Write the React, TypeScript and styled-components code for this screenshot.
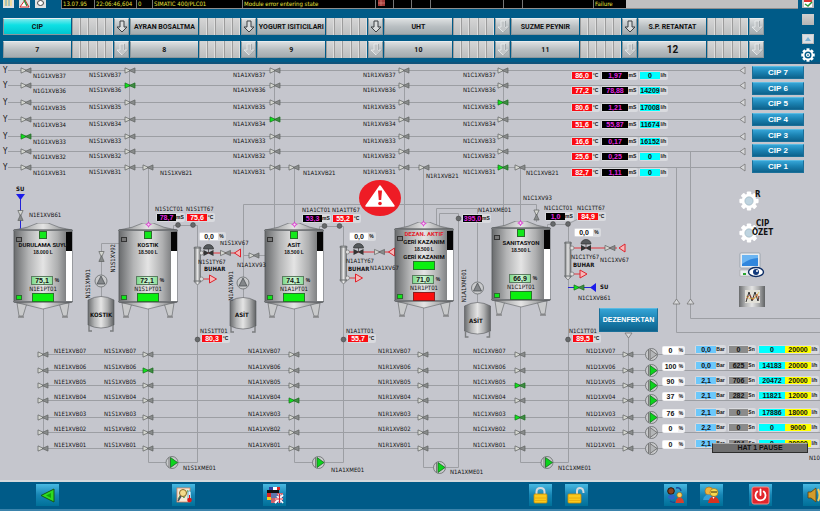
import React from 'react';
import styled, { createGlobalStyle, css } from 'styled-components';

/* Plant coordinates are measured from the top of the station screen,
   so the header height is subtracted when an item is placed. */
const HEADER = 64;

const GlobalStyle = createGlobalStyle`
  * { box-sizing: border-box; }
  body { margin: 0; background: #005b88; }
  button { padding: 0; margin: 0; border: 0; font: inherit; color: inherit; cursor: pointer; }
`;

const Screen = styled.div`
  display: flex;
  flex-direction: column;
  min-height: 100vh;
  overflow: hidden;
  background: #005b88;
  color: #111;
  font-family: 'DejaVu Sans Condensed', 'DejaVu Sans', sans-serif;
  font-size: 6px;
  line-height: 8px;
  white-space: nowrap;
`;

/* ---------- header ---------- */

const Header = styled.header`
  display: flex;
  height: ${HEADER}px;
  border-bottom: 2px solid #0f527a;
`;

const HeaderMain = styled.div`
  flex: 1;
  min-width: 0;
  display: flex;
  flex-direction: column;
`;

const AlarmStrip = styled.div`
  display: flex;
  align-items: stretch;
  height: 9px;
  padding-left: 3px;
`;

const AckTools = styled.div`
  display: flex;
  gap: 5px;
  width: 58px;
`;

const AckButton = styled.button`
  width: 11px;
  height: 8px;
  background: #dfe1e2;
  display: flex;
  justify-content: center;
`;

const AlarmLine = styled.div`
  flex: 1;
  display: flex;
  margin-right: -29px;
  background: #c0c0c0;
  border-bottom: 1px solid #8f8f8f;
`;

const AlarmCell = styled.span<{ $w: number }>`
  width: ${(p) => p.$w}px;
  background: #000;
  border-left: 1px solid #777;
  padding-left: 1px;
  color: #e8e23a;
  line-height: 7px;
`;

const TabArea = styled.nav`
  display: grid;
  grid-template-columns: repeat(6, 1fr);
  column-gap: 1px;
  row-gap: 6px;
  padding: 9px 5px 0 3px;
`;

const TabGroup = styled.div`
  display: flex;
  gap: 1px;
  height: 17px;
`;

const plate = css`
  background: linear-gradient(#dcdfe0, #b9bfc2 50%, #a3abaf);
  border: 1px solid #8a979d;
  border-top-color: #e9ecee;
`;

const Tab = styled.button<{ $active?: boolean; $large?: boolean }>`
  ${plate}
  flex: 68;
  min-width: 0;
  border-right: 0;
  font: 700 ${(p) => (p.$large ? 10 : 7)}px/14px Roboto, 'Liberation Sans', sans-serif;
  color: #111;
  ${(p) => p.$active && css`background: linear-gradient(#7ae9ec, #0fe0e4 40%, #00c5cf);`}
`;

const Stripes = styled.div`
  flex: 42;
  display: grid;
  grid-template-columns: repeat(5, 1fr);
`;

const Stripe = styled.span`
  background: linear-gradient(#d6d6d6, #bcbebf);
  border-left: 1px solid #9c9c9c;
  border-right: 1px solid #dedede;
`;

const TabArrow = styled.button`
  ${plate}
  width: 15px;
  display: flex;
  align-items: center;
  justify-content: center;
`;

const SideTools = styled.div`
  width: 51px;
  display: grid;
  grid-template-rows: 14px 20px 14px 14px;
  align-items: start;
  justify-items: center;
  padding-left: 26px;
`;

const SideButton = styled.button<{ $h: number; $bare?: boolean }>`
  width: ${(p) => (p.$bare ? 14 : 12)}px;
  height: ${(p) => p.$h}px;
  background: ${(p) => (p.$bare ? 'none' : 'linear-gradient(#d0d0d0, #b4b4b4)')};
  display: flex;
  align-items: center;
  justify-content: center;
`;

/* ---------- plant ---------- */

const Plant = styled.main`
  position: relative;
  flex: 1;
  min-height: 416px;
  background: #c5c6cd;
  overflow: hidden;
`;

const Drawing = styled.svg`
  position: absolute;
  inset: 0;
  width: 100%;
  height: 100%;
`;

const at = css<{ $x: number; $y: number }>`
  position: absolute;
  left: ${(p) => p.$x}px;
  top: ${(p) => p.$y - HEADER}px;
`;

const Tag = styled.span<{ $x: number; $y: number; $bold?: boolean; $size?: number }>`
  ${at}
  font-size: ${(p) => p.$size ?? 6}px;
  font-weight: ${(p) => (p.$bold ? 700 : 400)};
  line-height: 7px;
`;

const SideTag = styled(Tag)`
  writing-mode: vertical-rl;
  transform: rotate(180deg);
`;

const PlacedRow = styled.div<{ $x: number; $y: number; $gap?: number }>`
  ${at}
  display: flex;
  gap: ${(p) => p.$gap ?? 2}px;
`;

const Panel = styled.span<{ $white?: boolean }>`
  display: flex;
  padding: 1px;
  border-radius: 2px;
  background: ${(p) => (p.$white ? '#f0f0f2' : '#d9dade')};
`;

const Value = styled.output<{ $bg: string; $fg?: string; $w: number }>`
  width: ${(p) => p.$w}px;
  height: 7px;
  background: ${(p) => p.$bg};
  color: ${(p) => p.$fg ?? '#111'};
  font-family: 'Liberation Sans', sans-serif;
  font-size: 7px;
  font-weight: 700;
  line-height: 7px;
  text-align: center;
`;

const Unit = styled.span<{ $w: number }>`
  width: ${(p) => p.$w}px;
  font-family: 'Liberation Sans', sans-serif;
  font-size: 5px;
  font-weight: 700;
  line-height: 7px;
  text-align: center;
`;

const CipList = styled.div`
  position: absolute;
  top: 2px;
  left: 752px;
  width: 52px;
  height: 107px;
  display: flex;
  flex-direction: column;
  justify-content: space-between;
`;

const blueFace = css`
  background: linear-gradient(#35a4d6, #1c84b4 45%, #0d628c);
  border: 1px solid #1b6f98;
  border-top-color: #5bbbe2;
  color: #fff;
  font-family: 'Liberation Sans', sans-serif;
  font-weight: 700;
`;

const CipButton = styled.button`
  ${blueFace}
  height: 13px;
  font-size: 8px;
  line-height: 11px;
`;

const DisinfectantButton = styled.button<{ $x: number; $y: number }>`
  ${blueFace}
  ${at}
  width: 59px;
  height: 24px;
  font-size: 7px;
`;

const PauseBanner = styled.button<{ $x: number; $y: number }>`
  ${at}
  width: 96px;
  height: 10px;
  background: #6f6f70;
  border: 1px solid #2d2d2d;
  border-top-color: #aaa;
  font: 700 7px/8px 'Liberation Sans', sans-serif;
  color: #111;
`;

const ToolButton = styled.button<{ $x: number; $y: number; $w: number; $h: number }>`
  ${at}
  width: ${(p) => p.$w}px;
  height: ${(p) => p.$h}px;
  background: none;
`;

const TankBox = styled.section<{ $x: number; $y: number }>`
  ${at}
  width: 60px;
  height: 96px;
`;

const TankArt = styled.svg`
  position: absolute;
  inset: 0;
`;

const TankFace = styled.div`
  position: relative;
  height: 79px;
  padding-top: 8px;
  display: flex;
  flex-direction: column;
  align-items: center;
`;

const Lamp = styled.i`
  width: 8px;
  height: 8px;
  margin-bottom: 2px;
  background: #12e81b;
  border: 1px solid #2b6a2b;
`;

const TankName = styled.strong<{ $alarm?: boolean }>`
  line-height: 8px;
  font-family: Roboto, 'Liberation Sans', sans-serif;
  font-weight: 700;
  color: ${(p) => (p.$alarm ? '#e3202a' : '#111')};
`;

const Volume = styled.span`
  font-family: 'Liberation Sans', sans-serif;
  font-size: 5px;
  font-weight: 700;
  line-height: 7px;
`;

const Command = styled.button<{ $stop?: boolean }>`
  width: 22px;
  height: 9px;
  flex: none;
  background: ${(p) => (p.$stop ? '#fb0d0d' : '#0bf00f')};
  border: 1px solid ${(p) => (p.$stop ? '#8a1d1d' : '#27752a')};
`;

const Level = styled.div`
  margin-top: auto;
  display: flex;
  align-items: center;
  padding-left: 6px;
`;

const LevelValue = styled.output`
  width: 22px;
  height: 9px;
  background: linear-gradient(90deg, #7dd88c, #d3f7d6 50%, #8de09a);
  border: 1px solid #5b7c60;
  font-family: 'Liberation Sans', sans-serif;
  font-size: 7px;
  font-weight: 700;
  line-height: 7px;
  text-align: center;
`;

/* ---------- footer ---------- */

const Footer = styled.footer`
  height: 31px;
  padding-top: 2px;
  overflow: hidden;
  background: #005b88;
  border-top: 2px solid #d4d9dd;
  border-bottom: 2px solid #3a83ab;
`;

const FooterBar = styled.nav`
  display: flex;
  margin-right: -6px;
`;

const Slot = styled.div<{ $space: number }>`
  flex: ${(p) => p.$space} 0 23px;
  display: flex;
  justify-content: flex-end;
`;

const FooterButton = styled.button`
  width: 23px;
  height: 22px;
  background: linear-gradient(#48b9e2, #1685b4 50%, #007199);
  display: flex;
  align-items: center;
  justify-content: center;
`;

/* ---------- symbols ---------- */

const PIPE = '#9c9ea3';

type ValveProps = { x: number; y: number; open?: boolean; vertical?: boolean };
function Valve({ x, y, open, vertical }: ValveProps) {
  return (
    <g transform={`translate(${x} ${y})${vertical ? ' rotate(90)' : ''}`} stroke={open ? '#16691a' : '#5d605f'} strokeWidth="0.7">
      <path d="M-5 -2.600 L0.800 0 L-5 2.600Z" fill={open ? '#0ee31b' : '#d4d6d0'} />
      <path d="M5 -2.600 L-0.800 0 L5 2.600Z" fill={open ? '#3f8b42' : '#888b8b'} />
    </g>
  );
}

function Pump({ x, y, on, up }: { x: number; y: number; on?: boolean; up?: boolean }) {
  return (
    <g transform={`translate(${x} ${y})`}>
      <circle r="6" fill="#c9cacc" stroke="#66696b" strokeWidth="0.8" />
      {up ? (
        <path d="M-4 3 L0 -5 L4 3Z" fill="#84878a" stroke="#44474a" strokeWidth="0.7" />
      ) : (
        <>
          <path d="M-3 -5 V5" stroke="#666" strokeWidth="0.8" />
          <path d="M-1.500 -5 L5.500 0 L-1.500 5Z" fill={on ? '#0bd51c' : '#b4b6b8'} stroke={on ? '#176a1e' : '#666'} strokeWidth="0.8" />
        </>
      )}
    </g>
  );
}

function SmallTank({ x, y }: { x: number; y: number }) {
  return (
    <g transform={`translate(${x} ${y})`} stroke="#55585a" strokeWidth="0.6">
      <path d="M0 4 Q13 -3 26 4 V29 Q13 35 0 29Z" fill="url(#steel)" />
      <path d="M1 29 V35 H4 M25 29 V35 H22" fill="none" strokeWidth="1.4" stroke="#7b7d7f" />
    </g>
  );
}

/* Steam line: heat exchanger, control valve, shut-off valve and condensate outlet. */
function SteamLine({ x, y, reach = 0 }: { x: number; y: number; reach?: number }) {
  return (
    <g transform={`translate(${x} ${y})`}>
      <path d={`M3 0 H${42 + reach} M3 26 H14`} stroke="#e0353c" strokeWidth="1" />
      <path d="M-3 -6 H3 V29 L0 32 L-3 29Z" fill="url(#steel)" stroke="#6d7072" strokeWidth="0.7" />
      <path d="M-4 -5 H4 M-4 28 H4" stroke="#6d7072" />
      <circle cx="4" cy="0" r="2" fill="#ddd" stroke="#777" strokeWidth="0.7" />
      <circle cx="4" cy="26" r="2" fill="#ddd" stroke="#777" strokeWidth="0.7" />
      <path d={`M${6 + reach} -4 A5 4.500 0 0 1 ${16 + reach} -4Z M${11 + reach} -4 V0`} fill="#55595c" stroke="#333" strokeWidth="0.7" />
      <path d={`M${6 + reach} -3 L${12 + reach} 0 L${6 + reach} 3Z M${16 + reach} -3 L${10 + reach} 0 L${16 + reach} 3Z`} fill="#333" />
      <Valve x={28 + reach * 2} y={0} />
      <path d={`M${43 + reach * 2} -4 L${37 + reach * 2} 0 L${43 + reach * 2} 4Z M12 22 L19 26 L12 30Z`} fill="#f6b9b9" stroke="#e0202a" />
    </g>
  );
}

function Gear({ size, core }: { size: number; core: string }) {
  return (
    <svg width={size} height={size} viewBox="-12 -12 24 24">
      <g fill="#fff">
        {[0, 45, 90, 135].map((a) => (
          <rect key={a} x="-2.600" y="-11.500" width="5.200" height="23" rx="1" transform={`rotate(${a})`} />
        ))}
        <circle r="8.800" />
      </g>
      <circle r="5" fill={core} stroke="#8da4b0" strokeWidth="0.6" />
    </svg>
  );
}

/* Ring-shaped gear with a hub, used on the dark header. */
function SettingsGear() {
  return (
    <svg width="14" height="14" viewBox="-12 -12 24 24">
      <g fill="#fff">
        {[0, 45, 90, 135].map((a) => (
          <rect key={a} x="-2.600" y="-11.500" width="5.200" height="23" transform={`rotate(${a})`} />
        ))}
        <circle r="9" />
      </g>
      <circle r="6" fill="#005b88" />
      <circle r="3.600" fill="#fff" />
      <circle r="1.500" fill="#005b88" />
    </svg>
  );
}

function Arrow({ dim }: { dim?: boolean }) {
  return (
    <svg width="12" height="13" viewBox="0 0 12 13">
      <path d="M4 1 H8 V7 H11 L6 12 L1 7 H4Z" fill={dim ? '#c2c6c8' : '#d9dcdd'} stroke={dim ? '#eef0f1' : '#3c4144'} strokeWidth={dim ? 0.8 : 1} />
      {dim && <path d="M8.500 1 V7 M6.500 12 L11.500 7" stroke="#8f9699" strokeWidth="0.7" />}
    </svg>
  );
}

/* ---------- data ---------- */

const TABS = [
  ['CIP', '7'],
  ['AYRAN BOSALTMA', '8'],
  ['YOGURT ISITICILARI', '9'],
  ['UHT', '10'],
  ['SUZME PEYNIR', '11'],
  ['S.P. RETANTAT', '12'],
];
const DIM_ARROWS = [3, 5];

const ALARM_CELLS: [number, string][] = [
  [33, '13.07.95'], [42, '22:06:46,604'], [16, '0'], [90, 'SIMATIC 400/PLC01'],
  [133, 'Module error entering state'], [18, ''], [18, ''], [19, ''], [73, ''], [19, ''], [71, ''], [33, 'Failure'],
];

const SUPPLY = [
  { n: 7, y: 70, t: '86,0', c: '1,97', f: '0', open: '' },
  { n: 6, y: 85, t: '77,2', c: '78,88', f: '14209', open: 'S' },
  { n: 5, y: 102, t: '80,6', c: '1,21', f: '17008', open: 'C' },
  { n: 4, y: 119, t: '51,6', c: '55,87', f: '11674', open: 'A' },
  { n: 3, y: 136, t: '16,6', c: '0,17', f: '16152', open: 'G' },
  { n: 2, y: 151, t: '25,6', c: '0,25', f: '0', open: '' },
  { n: 1, y: 167, t: '82,7', c: '1,11', f: '0', open: 'C' },
];
const SUPPLY_COLS = [
  { id: 'G', valve: 26, label: 33, drop: 2 },
  { id: 'S', valve: 130, label: 89, drop: 1 },
  { id: 'A', valve: 275, label: 233, drop: 1 },
  { id: 'R', valve: 404, label: 363, drop: 1 },
  { id: 'C', valve: 503, label: 463, drop: 1 },
];

const RETURN = [
  { n: 7, y: 354, open: '', pump: false, p: '0', bar: '0,0', sn: '0', q: '0', set: '20000' },
  { n: 6, y: 370, open: 'S', pump: true, p: '100', bar: '0,0', sn: '625', q: '14183', set: '20000' },
  { n: 5, y: 385, open: 'C', pump: true, p: '90', bar: '2,1', sn: '706', q: '20472', set: '20000' },
  { n: 4, y: 400, open: 'A', pump: true, p: '37', bar: '2,1', sn: '282', q: '11821', set: '12000' },
  { n: 3, y: 417, open: 'C', pump: true, p: '76', bar: '2,1', sn: '0', q: '17886', set: '18000' },
  { n: 2, y: 432, open: '', pump: false, p: '0', bar: '2,2', sn: '0', q: '0', set: '9000' },
  { n: 1, y: 448, open: '', pump: false, p: '0', bar: '2,1', sn: '404', q: '0', set: '20000' },
];
const RETURN_COLS = [
  { id: 'E', valve: 43, label: 54, kind: 'XVB' },
  { id: 'S', valve: 148, label: 104, kind: 'XVB' },
  { id: 'A', valve: 294, label: 248, kind: 'XVB' },
  { id: 'R', valve: 423, label: 378, kind: 'XVB' },
  { id: 'C', valve: 520, label: 473, kind: 'XVB' },
  { id: 'D', valve: 628, label: 586, kind: 'XV' },
];

type TankData = { x: number; y: number; name: string; vol: string; level: string; tag: string; alarm?: string };
const TANKS: TankData[] = [
  { x: 13, y: 223, name: 'DURULAMA SUYU', vol: '18.000 L', level: '75,1', tag: 'N1E1PT01' },
  { x: 118, y: 223, name: 'KOSTIK', vol: '18.500 L', level: '72,1', tag: 'N1S1PT01' },
  { x: 264, y: 223, name: 'ASİT', vol: '18.500 L', level: '74,1', tag: 'N1A1PT01' },
  { x: 394, y: 222, name: 'GERİ KAZANIM', vol: '18.500 L', level: '71,0', tag: 'N1R1PT01', alarm: 'DEZAN. AKTIF' },
  { x: 491, y: 221, name: 'SANITASYON', vol: '18.500 L', level: '66,9', tag: 'N1C1PT01' },
];

const TAGS: [string, number, number][] = [
  ['N1S1XVB21', 160, 169], ['N1A1XVB21', 303, 169], ['N1R1XVB21', 426, 172], ['N1C1XVB21', 526, 169],
  ['N1E1XVB61', 29, 211],
  ['N1S1CT01', 155, 205], ['N1S1TT67', 186, 205], ['N1S1XV67', 220, 239], ['N1S1TY67', 198, 258],
  ['N1A1XV93', 237, 261], ['N1S1TT01', 200, 327],
  ['N1A1CT01', 302, 206], ['N1A1TT67', 332, 206], ['N1A1TY67', 346, 257], ['N1A1XV67', 370, 264], ['N1A1TT01', 346, 327],
  ['N1A1XME01', 478, 206], ['N1C1XV93', 523, 194], ['N1C1CT01', 544, 204], ['N1C1TT67', 577, 204],
  ['N1C1TY67', 571, 253], ['N1C1XV67', 600, 256], ['N1C1XVB61', 578, 294], ['N1C1TT01', 569, 327],
  ['N1S1XME01', 183, 464], ['N1A1XME01', 331, 466], ['N1A1XME01', 450, 468], ['N1C1XME01', 558, 464],
  ['N10', 809, 454],
];
const BOLD_TAGS: [string, number, number][] = [
  ['SU', 16, 185], ['SU', 600, 283], ['BUHAR', 204, 265], ['BUHAR', 348, 265], ['BUHAR', 573, 261],
  ['KOSTIK', 90, 311], ['ASİT', 235, 311], ['ASİT', 469, 317],
];
const SIDE_TAGS: [string, number, number][] = [
  ['N1S1XV92', 109, 244], ['N1S1XM01', 84, 269], ['N1A1XM01', 227, 271], ['N1A1XME01', 460, 269],
];
const PROBES: [string, 'T' | 'C', number, number][] = [
  ['78,7', 'C', 156, 213], ['75,6', 'T', 186, 213], ['80,3', 'T', 201, 334],
  ['53,3', 'C', 302, 214], ['55,2', 'T', 332, 214], ['55,7', 'T', 347, 334],
  ['395,0', 'C', 462, 214], ['1,0', 'C', 545, 212], ['84,9', 'T', 577, 212], ['89,5', 'T', 572, 334],
];

/* ---------- parts ---------- */

function Reading({ kind, value }: { kind: 'T' | 'C' | 'F'; value: string }) {
  if (kind === 'T') return <Panel><Value $bg="#fb0b12" $fg="#fff" $w={20}>{value}</Value><Unit $w={7}>°C</Unit></Panel>;
  if (kind === 'C') return <Panel><Value $bg="#000" $fg="#e02bdf" $w={19}>{value}</Value><Unit $w={8}>mS</Unit></Panel>;
  return <Panel><Value $bg="#0ff" $w={20}>{value}</Value><Unit $w={7}>l/h</Unit></Panel>;
}

function Tank({ x, y, name, vol, level, tag, alarm }: TankData) {
  return (
    <TankBox $x={x} $y={y} aria-label={name}>
      <TankArt width="60" height="96" viewBox="0 0 60 96">
        <path d="M4 80 H14 L10 93 H6Z M56 80 H46 L50 93 H54Z" fill="#c9cacb" stroke="#6b6e70" strokeWidth="0.7" />
        <path d="M5 94 H11 M49 94 H55" stroke="#666" />
        <path d="M1 7 Q15 5 25 0 H35 Q45 5 59 7Z" fill="url(#steel)" stroke="#606366" strokeWidth="0.6" />
        <path d="M1 79 L30 86 L59 79Z" fill="url(#steel)" stroke="#606366" strokeWidth="0.6" />
        <rect x="1" y="7" width="58" height="72" fill="url(#steel)" stroke="#55585a" strokeWidth="0.8" />
        <path d="M0 7.500 H60 M0 78.500 H60" stroke="#74777a" />
        <rect x="53" y="9" width="6" height="69" fill="#fff" />
        <rect x="53" y="9" width="6" height="19" fill="#050505" />
        <rect x="3.500" y="14.500" width="5" height="4" fill="#777" stroke="#333" />
        <rect x="3.500" y="72.500" width="5" height="4" fill="#10e81a" stroke="#2c6d2e" />
      </TankArt>
      <TankFace>
        {alarm ? <TankName $alarm>{alarm}</TankName> : <Lamp />}
        <TankName>{name}</TankName>
        <Volume>{vol}</Volume>
        {alarm && <TankName>{name}</TankName>}
        {alarm && <Command aria-label="Start" />}
        <Level><LevelValue>{level}</LevelValue><Unit $w={8}>%</Unit></Level>
        <span>{tag}</span>
        <Command $stop={!!alarm} aria-label={`${tag} command`} />
      </TankFace>
    </TankBox>
  );
}

function Piping() {
  return (
    <Drawing aria-hidden="true">
      <defs>
        <linearGradient id="steel">
          <stop offset="0" stopColor="#696b6d" />
          <stop offset="0.250" stopColor="#b3b4b5" />
          <stop offset="0.500" stopColor="#e4e4e4" />
          <stop offset="0.750" stopColor="#aeafb0" />
          <stop offset="1" stopColor="#606264" />
        </linearGradient>
      </defs>
      <g transform={`translate(0 -${HEADER})`}>
        <g stroke={PIPE} fill="none">
          {SUPPLY.map((r) => <path key={r.n} d={`M8 ${r.y + 0.5} H742`} />)}
          {RETURN.map((r) => <line key={r.n} x1="38" x2="100%" y1={r.y + 0.5} y2={r.y + 0.5} />)}
          <path d="M129.500 70 V230 M274.500 70 V230 M404.500 70 V230 M503.500 70 V228" />
          <path d="M148.500 167 V224 M294.500 167 V224 M423.500 167 V224 M520.500 167 V222" />
          <path d="M690.500 151 V318.500 H2000 M676.500 167 V332.500 H2000" />
          <path d="M43.500 308 V448 M148.500 308 V462.500 H197.500 V225.500 H173.500 V230" />
          <path d="M294.500 308 V462.500 H343.500 V226.500 H319.500 V230" />
          <path d="M423.500 308 V467.500 H458.500 V213.500 H439.500 V229 M436.500 229 V208.500 H477.500 V303" />
          <path d="M520.500 306 V462.500 H568.500 V224.500 H547.500 V228 M568 224 L580 218" />
          <path d="M628.500 333 V448 M119 243.500 H101.500 V297 M243.500 298 V204.500 H536.500 V222 M243 255.500 H265" />
        </g>
        {SUPPLY.map((r) => (
          <g key={r.n}>
            <path d={`M745 ${r.y - 3} V${r.y + 4} L740 ${r.y + 0.5}Z`} fill="#d7d8da" stroke="#777" strokeWidth="0.8" />
            {SUPPLY_COLS.map((c) => <Valve key={c.id} x={c.valve} y={r.y + 0.5} open={r.open === c.id} />)}
          </g>
        ))}
        {[148, 294, 424, 520].map((x) => <Valve key={x} x={x} y={167.5} />)}
        {RETURN.map((r) => (
          <g key={r.n}>
            {RETURN_COLS.map((c) => <Valve key={c.id} x={c.valve} y={r.y + 0.5} open={r.open === c.id} />)}
            <Pump x={651.5} y={r.y + 0.5} on={r.pump} />
          </g>
        ))}
        <path d="M673 304 L676.500 299 L680 304Z M687 304 L690.500 299 L694 304Z M625 333 H632 L628.500 338Z" fill="#d7d8da" stroke="#777" strokeWidth="0.8" />
        <Pump x={172} y={462.5} on />
        <Pump x={318.5} y={462.5} on />
        <Pump x={439.5} y={467.5} on />
        <Pump x={547} y={462.5} on />
        <Pump x={101} y={281} up />
        <Pump x={243} y={283} up />
        <Pump x={477.5} y={288} up />
        <Valve x={101.5} y={256.5} vertical />
        <Valve x={536.5} y={215} vertical />
        <Valve x={254} y={255.5} />
        <SmallTank x={88} y={296} />
        <SmallTank x={230} y={297} />
        <SmallTank x={464.5} y={302} />
        <SteamLine x={197.5} y={253} />
        <SteamLine x={343.5} y={252} reach={4} />
        <SteamLine x={568} y={248} reach={7} />
        <path d="M20.500 198 V228 L18 234 M568 287.500 H592" stroke="#2222d8" fill="none" />
        <path d="M16 194 H25 L20.500 200Z M596 283 V292 L590 287.500Z" fill="#1b1bea" />
        <Valve x={20.5} y={215.5} vertical />
        <Valve x={579} y={287.5} open />
        <g fill="#66696b" stroke="#444" strokeWidth="0.6">
          {[[178, 225], [193, 225], [197.5, 339.5], [324.5, 226], [339.5, 226], [343.5, 339.5], [458.5, 218.5], [553, 224], [568, 224], [568, 339.5]].map(([x, y]) => (
            <circle key={`${x}-${y}`} cx={x} cy={y} r="2.400" />
          ))}
        </g>
        <ellipse cx="380" cy="198" rx="21" ry="18" fill="#ee1c25" />
        <path d="M380 186 L394 206 H366Z" fill="#fff" stroke="#fff" strokeWidth="1.500" strokeLinejoin="round" />
        <path d="M378 190.500 H382 L381.200 200 H378.800Z" fill="#ee1c25" />
        <circle cx="380" cy="203.500" r="1.800" fill="#ee1c25" />
      </g>
    </Drawing>
  );
}

/* Spray-ball markers on the tank domes. */
function SprayBalls() {
  return (
    <Drawing aria-hidden="true" pointerEvents="none">
      <g transform={`translate(0 -${HEADER})`} fill="#f7d3f3" stroke="#d93bd0">
        {[[148.5, 224.5], [294.5, 224.5], [423.5, 223.5], [520.5, 223]].map(([x, y]) => (
          <g key={x}>
            <path d={`M${x - 3} ${y} H${x + 3} M${x} ${y - 3} V${y + 3}`} strokeWidth="0.8" />
            <circle cx={x} cy={y} r="1.600" />
          </g>
        ))}
      </g>
    </Drawing>
  );
}

const padlock = (open: boolean) => (
  <svg width="19" height="19" viewBox="0 0 19 19">
    <path d={open ? 'M10 9 V5 Q10 2 13 2 Q16.500 2 16.500 7' : 'M5.500 9 V6 Q5.500 2 9.500 2 Q13.500 2 13.500 6 V9'} fill="none" stroke="#d5d9dc" strokeWidth="2" />
    <rect x={open ? 1 : 3} y="8" width="13" height="9" rx="1" fill="#fbc91c" stroke="#c58a08" strokeWidth="0.8" />
    <path d={open ? 'M2 12 H13 M2 14.500 H13' : 'M4 12 H15 M4 14.500 H15'} stroke="#e6a80c" strokeWidth="0.8" />
  </svg>
);

const FOOTER_ITEMS: { label: string; space: number; icon: React.ReactNode }[] = [
  { label: 'Back', space: 36, icon: <svg width="17" height="17" viewBox="0 0 17 17"><path d="M15 2 V15 L2 8.500Z" fill="#2edc20" stroke="#175a12" /><path d="M12 6 V11 L7 8.500Z" fill="#12a50c" /></svg> },
  {
    label: 'Temperature trends', space: 113, icon: (
      <svg width="18" height="18" viewBox="0 0 18 18">
        <rect x="2" y="2" width="13" height="14" fill="#f3e9d6" stroke="#e0805a" strokeWidth="0.8" />
        <path d="M3 13 L6 8 L9 12 L13 4" stroke="#56a35a" fill="none" />
        <circle cx="8" cy="7" r="3.500" fill="#f4dc8a" stroke="#8a6a24" /><path d="M6 10 L3 15" stroke="#46505a" strokeWidth="1.500" />
        <rect x="13" y="5" width="3" height="9" rx="1.500" fill="#d9f4ff" stroke="#28a" strokeWidth="0.6" /><circle cx="14.500" cy="14" r="2.300" fill="#e01818" /><path d="M14.500 9 V13" stroke="#e01818" />
      </svg>
    ),
  },
  {
    label: 'Language', space: 68, icon: (
      <svg width="19" height="18" viewBox="0 0 19 18">
        <path d="M4 1 H15 V4 H4Z" fill="#fff" /><path d="M4 1 H8 V4 H4Z" fill="#2b3fa0" /><path d="M12 1 H15 V4 H12Z" fill="#d22" />
        <path d="M2 4 H14 V7 H2Z" fill="#111" /><path d="M2 7 H7 V11 H2Z" fill="#d22" /><path d="M2 11 H7 V14 H2Z" fill="#f3cf20" />
        <rect x="6" y="7" width="12" height="10" fill="#c9606c" />
        <path d="M6 7 H12 V12 H6Z" fill="#5d78ab" /><path d="M12 9 H18 V17 H12Z" fill="#27408c" />
        <path d="M10 17 L18 9 M12 10 L18 17" stroke="#fff" strokeWidth="1.800" /><path d="M14.500 8 V17 M10 13 H18" stroke="#fff" strokeWidth="2.200" />
        <path d="M14.500 8 V17 M10 13 H18" stroke="#cf2130" strokeWidth="1.100" />
      </svg>
    ),
  },
  { label: 'Lock', space: 243, icon: padlock(false) },
  { label: 'Unlock', space: 13, icon: padlock(true) },
  {
    label: 'Change user', space: 76, icon: (
      <svg width="19" height="18" viewBox="0 0 19 18">
        <circle cx="5" cy="5" r="3.300" fill="#8a4320" stroke="#2a1509" /><path d="M2 12 Q2 8.500 5.500 8.500 Q9 8.500 9 12 L6 14Z" fill="#2f62c8" />
        <path d="M10 2 Q14 1 15 5 M4 15 Q7 17 9 16" stroke="#164a96" fill="none" strokeWidth="1.400" />
        <circle cx="13.500" cy="9" r="2.600" fill="#f4d264" stroke="#a06a14" strokeWidth="0.7" /><path d="M9.500 17 Q10 11.500 13.500 11.500 Q17.500 11.500 18 17Z" fill="#d9402c" />
      </svg>
    ),
  },
  {
    label: 'Users', space: 13, icon: (
      <svg width="19" height="18" viewBox="0 0 19 18">
        <circle cx="7" cy="5" r="4" fill="#f0b43c" stroke="#a8661a" strokeWidth="0.6" /><path d="M1 14 Q2 8.500 7 8.500 Q10 9 11 14Z" fill="#35a0d8" />
        <circle cx="12" cy="6.500" r="4" fill="#f8d94e" stroke="#9a6612" strokeWidth="0.6" /><path d="M9 6 H15" stroke="#33240b" />
        <path d="M6 17 Q7 10.500 11.500 10.500 Q16.500 10.500 17.500 17Z" fill="#d8321f" /><path d="M10.500 11 L11.500 13 L12.500 11Z" fill="#fff" />
      </svg>
    ),
  },
  {
    label: 'Shut down', space: 26, icon: (
      <svg width="19" height="19" viewBox="0 0 19 19">
        <rect x="1" y="1" width="17" height="17" rx="2" fill="#e2262c" stroke="#f58a86" />
        <path d="M6.300 5.500 A5 5 0 1 0 12.700 5.500 M9.500 3.500 V9" fill="none" stroke="#fff" strokeWidth="1.800" strokeLinecap="round" />
      </svg>
    ),
  },
  { label: 'Horn', space: 31, icon: <svg width="19" height="18" viewBox="0 0 19 18"><path d="M3 6 H6 L11 2 V16 L6 12 H3Z" fill="#d39c2b" stroke="#5e420d" strokeWidth="0.8" /><path d="M13 3 Q16 9 13 15" stroke="#f2cf62" strokeWidth="2" fill="none" /></svg> },
];

export default function App() {
  return (
    <Screen>
      <GlobalStyle />
      <Header>
        <HeaderMain>
          <AlarmStrip>
            <AckTools>
              <AckButton aria-label="Alarm list"><svg width="11" height="8"><path d="M1 0 H9 V6 H1Z" fill="#f1dda0" /><path d="M3 0 V6 M6 0 V6" stroke="#5aa6d8" /></svg></AckButton>
              <AckButton aria-label="Acknowledge"><svg width="11" height="8"><path d="M1 7 L6 0 L10 7Z" fill="#fff" stroke="#d42a2a" /><path d="M5 0 L8 6" stroke="#2c8f3a" strokeWidth="1.500" /></svg></AckButton>
              <AckButton aria-label="Reset"><svg width="11" height="8"><ellipse cx="5.500" cy="3" rx="3" ry="2.500" fill="#fff" stroke="#444" /></svg></AckButton>
            </AckTools>
            <AlarmLine>
              {ALARM_CELLS.map(([w, text], i) => (
                <AlarmCell key={i} $w={w}>
                  {i === 5 ? <svg width="8" height="6"><rect x="1" width="7" height="6" fill="#a33a38" /><path d="M1 3 H8 M4 0 V6" stroke="#d98" strokeWidth="0.6" /></svg> : text}
                </AlarmCell>
              ))}
            </AlarmLine>
          </AlarmStrip>
          <TabArea>
            {[0, 1].map((row) => TABS.map((t, i) => (
              <TabGroup key={t[row]}>
                <Tab $active={row === 0 && i === 0} $large={t[row] === '12'}>{t[row]}</Tab>
                <Stripes>{[0, 1, 2, 3, 4].map((s) => <Stripe key={s} />)}</Stripes>
                <TabArrow aria-label={`${t[row]} menu`}><Arrow dim={row === 1 || DIM_ARROWS.includes(i)} /></TabArrow>
              </TabGroup>
            )))}
          </TabArea>
        </HeaderMain>
        <SideTools>
          <SideButton $h={8} aria-label="Confirm"><svg width="10" height="8"><rect x="1" width="8" height="7" fill="#fff" /><path d="M1 1 H9" stroke="#d33" strokeWidth="2" /><path d="M2 4 L5 6 L9 2" stroke="#2b9a3b" fill="none" strokeWidth="1.500" /></svg></SideButton>
          <SideButton $h={11} aria-label="Blank" />
          <SideButton $h={10} aria-label="Picture"><svg width="10" height="8"><rect width="10" height="8" fill="#d8dfe4" /><path d="M2 6 L5 2 L8 6Z" fill="#7db4d6" /></svg></SideButton>
          <SideButton $h={14} $bare aria-label="Settings"><SettingsGear /></SideButton>
        </SideTools>
      </Header>

      <Plant>
        <Piping />
        {TANKS.map((t) => <Tank key={t.tag} {...t} />)}
        <SprayBalls />

        {SUPPLY.map((r) => (
          <React.Fragment key={r.n}>
            <Tag $x={3} $y={r.y - 3} $size={8}>Y</Tag>
            {SUPPLY_COLS.map((c) => <Tag key={c.id} $x={c.label} $y={r.y + c.drop}>{`N1${c.id}1XVB3${r.n}`}</Tag>)}
            <PlacedRow $x={571} $y={r.y + 1} $gap={1}>
              <Reading kind="T" value={r.t} />
              <Panel><Value $bg="#000" $fg="#e02bdf" $w={26}>{r.c}</Value><Unit $w={9}>mS</Unit></Panel>
              <Reading kind="F" value={r.f} />
            </PlacedRow>
          </React.Fragment>
        ))}

        {RETURN.map((r) => (
          <React.Fragment key={r.n}>
            {RETURN_COLS.map((c) => <Tag key={c.id} $x={c.label} $y={r.y - 7}>{`N1${c.id}1${c.kind}0${r.n}`}</Tag>)}
            <PlacedRow $x={662} $y={r.y - 8}>
              <Panel $white><Value $bg="#fff" $w={15}>{r.p}</Value><Unit $w={6}>%</Unit></Panel>
            </PlacedRow>
            <PlacedRow $x={695} $y={r.y - 9}>
              <Panel><Value $bg="#6cc8fb" $w={20}>{r.bar}</Value><Unit $w={9}>Bar</Unit></Panel>
              <Panel><Value $bg="#8b8b8b" $w={19}>{r.sn}</Value><Unit $w={7}>Sn</Unit></Panel>
              <Panel><Value $bg="#0ff" $w={26}>{r.q}</Value><Value $bg="#ff0" $w={26}>{r.set}</Value><Unit $w={7}>l/h</Unit></Panel>
            </PlacedRow>
          </React.Fragment>
        ))}

        {TAGS.map(([t, x, y]) => <Tag key={`${t}${x}`} $x={x} $y={y}>{t}</Tag>)}
        {BOLD_TAGS.map(([t, x, y]) => <Tag key={`${t}${x}`} $x={x} $y={y} $bold>{t}</Tag>)}
        {SIDE_TAGS.map(([t, x, y]) => <SideTag key={t} $x={x} $y={y}>{t}</SideTag>)}
        {PROBES.map(([v, kind, x, y]) => (
          <PlacedRow key={`${x}-${y}`} $x={x} $y={y}><Reading kind={kind} value={v} /></PlacedRow>
        ))}
        {[[199, 232], [349, 232], [574, 228]].map(([x, y]) => (
          <PlacedRow key={x} $x={x} $y={y}>
            <Panel><Value $bg="#fff" $w={18}>0,0</Value><Unit $w={7}>%</Unit></Panel>
          </PlacedRow>
        ))}

        <CipList>
          {SUPPLY.map((r) => <CipButton key={r.n}>CIP {r.n}</CipButton>)}
        </CipList>

        <ToolButton $x={739} $y={191} $w={20} $h={20} aria-label="Recipe"><Gear size={20} core="#bfd4e0" /></ToolButton>
        <Tag $x={755} $y={191} $bold $size={8}>R</Tag>
        <ToolButton $x={739} $y={223} $w={20} $h={20} aria-label="Summary"><Gear size={20} core="#bfd4e0" /></ToolButton>
        <Tag $x={756} $y={220} $bold $size={8}>CIP</Tag>
        <Tag $x={752} $y={229} $bold $size={8}>ÖZET</Tag>
        <ToolButton $x={739} $y={252} $w={26} $h={26} aria-label="Monitor view">
          <svg width="26" height="26" viewBox="0 0 26 26">
            <rect x="1" y="1" width="20" height="15" rx="1" fill="#e9edf0" stroke="#8b97a0" strokeWidth="0.7" />
            <rect x="3" y="3" width="16" height="11" fill="#2f86dd" /><path d="M3 3 H19 V6 Q11 6 3 12Z" fill="#6bb5f2" />
            <rect x="1" y="18" width="14" height="6" fill="#eceff1" stroke="#999" strokeWidth="0.5" /><rect x="4" y="21" width="3" height="2" fill="#2aa52f" />
            <ellipse cx="17" cy="20" rx="7.500" ry="4.500" fill="#fff" stroke="#0f2f66" strokeWidth="1.400" /><circle cx="17" cy="20" r="3" fill="#123a7c" /><circle cx="18" cy="19" r="1" fill="#fff" />
          </svg>
        </ToolButton>
        <ToolButton $x={739} $y={286} $w={26} $h={21} aria-label="Trends">
          <svg width="26" height="21" viewBox="0 0 26 21">
            <rect width="26" height="21" fill="url(#steel)" /><rect x="6" y="4" width="15" height="13" fill="#e2e0d8" />
            <path d="M7 16 L10 6 L13 15 L16 6 L19 15 L20 10" fill="none" stroke="#222" strokeWidth="0.900" />
            <path d="M7 13 L11 9 L14 14 L18 8 L20 13" fill="none" stroke="#d2402c" strokeWidth="0.600" /><path d="M7 10 L11 13 L16 12 L20 6" fill="none" stroke="#d7b21d" strokeWidth="0.600" />
          </svg>
        </ToolButton>

        <DisinfectantButton $x={599} $y={308}>DEZENFEKTAN</DisinfectantButton>
        <PauseBanner $x={712} $y={443}>HAT 1 PAUSE</PauseBanner>
      </Plant>

      <Footer>
        <FooterBar>
          {FOOTER_ITEMS.map((f) => (
            <Slot key={f.label} $space={f.space}><FooterButton aria-label={f.label}>{f.icon}</FooterButton></Slot>
          ))}
        </FooterBar>
      </Footer>
    </Screen>
  );
}
